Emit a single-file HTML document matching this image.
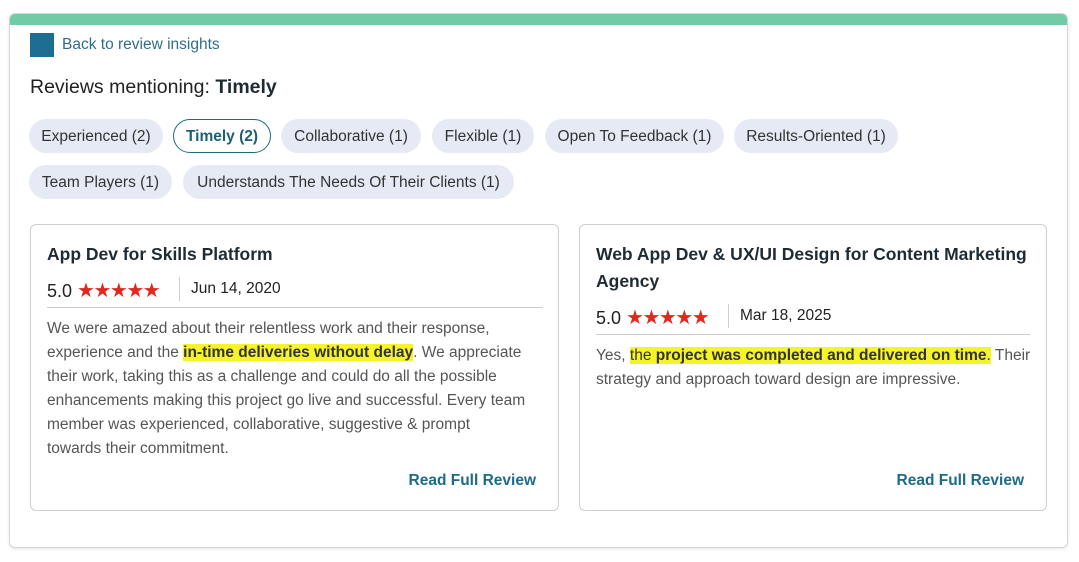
<!DOCTYPE html>
<html><head><meta charset="utf-8"><style>
*{box-sizing:border-box;margin:0;padding:0}
body{width:1079px;height:562px;background:#fff;font-family:"Liberation Sans",Arial,sans-serif;color:#333;position:relative;overflow:hidden}
.outer{position:absolute;left:9px;top:13px;width:1059px;height:535px;border:1px solid #d6d6d6;border-radius:6px;overflow:hidden;box-shadow:0 1px 3px rgba(0,0,0,.1)}
.bar{position:absolute;left:0;top:0;right:0;height:11px;background:#71cba7}
.a{position:absolute;white-space:nowrap}
.chip{position:absolute;height:34px;border-radius:17px;background:#e5eaf5;color:#333;font-size:15.5px;line-height:35px;text-align:center}
.chip.on{background:#fff;border:1px solid #1d6c79;color:#1e5f73;font-weight:bold;line-height:33px}
.card{position:absolute;top:224px;height:287px;border:1px solid #cfcfcf;border-radius:6px}
.t{font-size:17.5px;font-weight:bold;color:#1f2b33;line-height:27px}
.r{font-size:18px;color:#222}
.st{color:#e0291e;font-size:20px;letter-spacing:-1.5px}
.d{font-size:15.5px;color:#222}
.p{font-size:15.5px;line-height:24px;color:#555}
mark{background:#f5f32a;color:#333;font-weight:bold}
.rf{font-size:15.5px;font-weight:bold;color:#1e6a8a}
</style></head><body>
<div class="outer"><div class="bar"></div></div>
<div class="a" style="left:30px;top:33px;width:24px;height:24px;background:#1e6e92"></div>
<div class="a" style="left:62px;top:36px;font-size:15.5px;color:#2f6d8a">Back to review insights</div>
<div class="a" style="left:30px;top:76px;font-size:19.5px;color:#222">Reviews mentioning: <b style="color:#1f2b33">Timely</b></div>
<div class="chip" style="left:29px;top:119px;width:134px">Experienced (2)</div>
<div class="chip on" style="left:173px;top:119px;width:98px">Timely (2)</div>
<div class="chip" style="left:281px;top:119px;width:140px">Collaborative (1)</div>
<div class="chip" style="left:432px;top:119px;width:102px">Flexible (1)</div>
<div class="chip" style="left:545px;top:119px;width:179px">Open To Feedback (1)</div>
<div class="chip" style="left:734px;top:119px;width:164px">Results-Oriented (1)</div>
<div class="chip" style="left:29px;top:165px;width:143px">Team Players (1)</div>
<div class="chip" style="left:183px;top:165px;width:331px">Understands The Needs Of Their Clients (1)</div>

<div class="card" style="left:30px;width:529px">
<div class="a t" style="left:16px;top:16px">App Dev for Skills Platform</div>
<div class="a r" style="left:16px;top:53px">5.0 <span class="st">★★★★★</span></div>
<div class="a" style="left:148px;top:52px;width:1px;height:24px;background:#ccc"></div>
<div class="a d" style="left:160px;top:55px">Jun 14, 2020</div>
<div class="a" style="left:16px;top:82px;width:496px;height:1px;background:#ccc"></div>
<div class="a p" style="left:16px;top:92px">We were amazed about their relentless work and their response,<br>experience and the <mark>in-time deliveries without delay</mark>. We appreciate<br>their work, taking this as a challenge and could do all the possible<br>enhancements making this project go live and successful. Every team<br>member was experienced, collaborative, suggestive &amp; prompt<br>towards their commitment.</div>
<div class="a rf" style="right:22px;top:247px">Read Full Review</div>
</div>

<div class="card" style="left:579px;width:468px">
<div class="a t" style="left:16px;top:16px;width:440px;white-space:normal">Web App Dev &amp; UX/UI Design for Content Marketing Agency</div>
<div class="a r" style="left:16px;top:80px">5.0 <span class="st">★★★★★</span></div>
<div class="a" style="left:148px;top:79px;width:1px;height:24px;background:#ccc"></div>
<div class="a d" style="left:160px;top:82px">Mar 18, 2025</div>
<div class="a" style="left:16px;top:109px;width:434px;height:1px;background:#ccc"></div>
<div class="a p" style="left:16px;top:119px">Yes, <mark style="font-weight:normal">the <b>project was completed and delivered on time</b>.</mark> Their<br>strategy and approach toward design are impressive.</div>
<div class="a rf" style="right:22px;top:247px">Read Full Review</div>
</div>
</body></html>
